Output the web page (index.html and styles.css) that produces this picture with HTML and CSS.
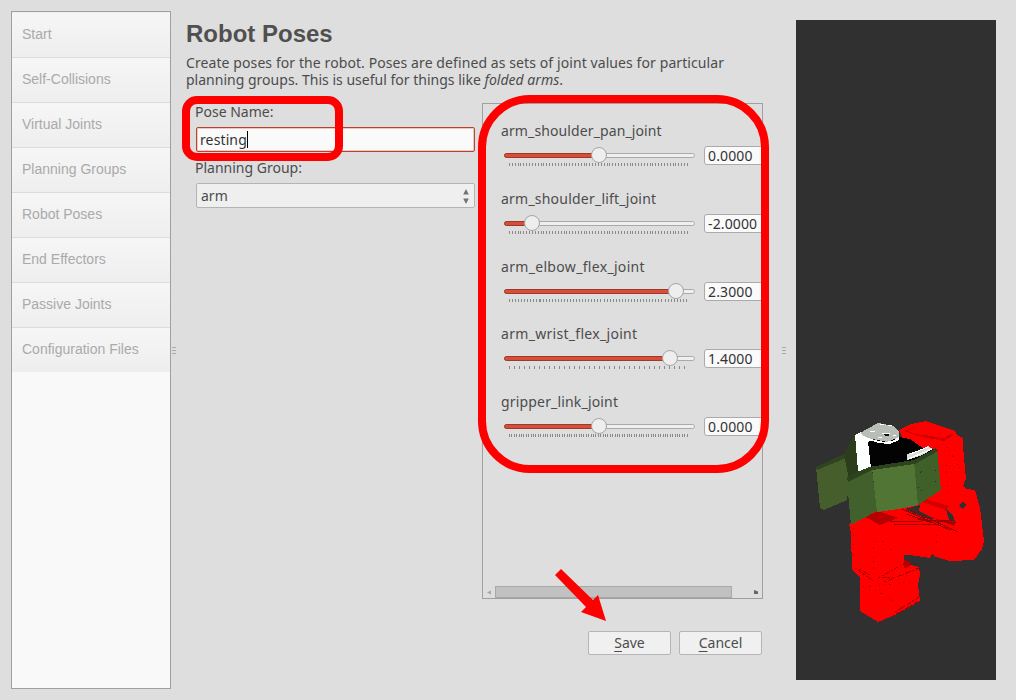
FILE: index.html
```html
<!DOCTYPE html>
<html lang="en">
<head>
<meta charset="utf-8">
<title>Robot Poses</title>
<link rel="stylesheet" href="styles.css">
</head>
<body>
<div class="app">
  <nav class="sidebar">
    <div class="nav-item">Start</div>
    <div class="nav-item">Self-Collisions</div>
    <div class="nav-item">Virtual Joints</div>
    <div class="nav-item">Planning Groups</div>
    <div class="nav-item">Robot Poses</div>
    <div class="nav-item">End Effectors</div>
    <div class="nav-item">Passive Joints</div>
    <div class="nav-item">Configuration Files</div>
  </nav>
  <div class="grip grip-left"><i></i><i></i><i></i></div>
  <main class="main">
    <h1 class="title">Robot Poses</h1>
    <p class="desc"><span class="line1">Create poses for the robot. Poses are defined as sets of joint values for particular</span><br><span class="line2">planning groups. This is useful for things like <em>folded arms</em>.</span></p>
    <div class="columns">
      <form class="form">
        <label class="label pose-label">Pose Name:</label>
        <div class="input"><span class="typed">resting</span><span class="caret"></span></div>
        <label class="label group-label">Planning Group:</label>
        <div class="select"><span>arm</span>
          <svg class="spin" width="8" height="18" viewBox="0 0 8 18"><path d="M4 2L6.8 7.5H1.2ZM4 17L6.8 11.5H1.2Z" fill="#737373"/></svg>
        </div>
      </form>
      <section class="joints">
        <div class="joint-list">
          <div class="joint"><div class="joint-name n1">arm_shoulder_pan_joint</div><div class="joint-row"><div class="slider"><div class="groove"><div class="fill" style="width:95px"></div></div><div class="knob" style="left:87px"></div><div class="ticks t1"></div></div><div class="value">0.0000</div></div></div>
          <div class="joint"><div class="joint-name n2">arm_shoulder_lift_joint</div><div class="joint-row"><div class="slider"><div class="groove"><div class="fill" style="width:28px"></div></div><div class="knob" style="left:20px"></div><div class="ticks t1"></div></div><div class="value">-2.0000</div></div></div>
          <div class="joint"><div class="joint-name n3">arm_elbow_flex_joint</div><div class="joint-row"><div class="slider"><div class="groove"><div class="fill" style="width:172px"></div></div><div class="knob" style="left:164px"></div><div class="ticks t3"></div></div><div class="value">2.3000</div></div></div>
          <div class="joint"><div class="joint-name n4">arm_wrist_flex_joint</div><div class="joint-row"><div class="slider"><div class="groove"><div class="fill" style="width:166px"></div></div><div class="knob" style="left:158px"></div><div class="ticks t4"></div></div><div class="value">1.4000</div></div></div>
          <div class="joint"><div class="joint-name n5">gripper_link_joint</div><div class="joint-row"><div class="slider"><div class="groove"><div class="fill" style="width:95px"></div></div><div class="knob" style="left:87px"></div><div class="ticks t5"></div></div><div class="value">0.0000</div></div></div>
        </div>
        <div class="scrollbar">
          <svg width="12" height="12" viewBox="0 0 12 12"><path d="M4 6.5L8 4.5V8.5Z" fill="#a5a5a5"/></svg>
          <div class="thumb"></div>
          <svg class="arrow-right" width="12" height="12" viewBox="0 0 12 12"><path d="M4 4L8 5.5V8H4Z" fill="#666"/></svg>
        </div>
      </section>
    </div>
    <div class="actions">
      <button class="btn"><span class="mn">S</span>ave</button>
      <button class="btn"><span class="mn">C</span>ancel</button>
    </div>
  </main>
  <div class="grip grip-right"><i></i><i></i><i></i></div>
  <aside class="preview">
    <svg class="robot" width="200" height="660" viewBox="796 20 200 660" shape-rendering="crispEdges">
      <path fill="#f00" d="M899 430L911 424L926 421L955 431L957 435L963 438L963 446L966 479L963 486L967 489L975 490L980 508L984 541L982 549L974 560L950 561L936 557L932 554L930 558L909 555L904 555L904 563L919 567L920 575L918 585L920 601L897 614L878 622L860 611L860 577L852 570L851 533L849 524L864 510L896 501L919 501L910 455Z"/>
      <path fill="#d40000" d="M903 431L926 424L954 435L944 441L922 437ZM917 496L949 506L945 510L920 501Z"/>
      <path fill="#f00" d="M907 431L926 423L953 433L944 438L916 434Z"/>
      <path fill="#b90000" d="M865 517L878 511L898 518L880 525ZM904 560L911 562L909 567L904 568ZM935 519L956 522L954 526Z"/>
      <path fill="#303030" d="M946 509L953 515L955 522L949 520ZM959 505L963 502L967 505L962 509ZM905 509L920 505L919 511L935 519L924 518Z"/>
      <path fill="none" stroke="#970000" stroke-width="1" d="M902 509L950 530M908 509L958 532M894 524H938M890 522L952 520M906 514L932 523M918 519L956 523"/>
      <path fill="none" stroke="#a40000" stroke-width="1" stroke-dasharray="2 2 5 1" d="M855 568L875 582M859 569L870 575M882 576L909 561M884 582L919 568M878 577H893M893 616L919 601M895 612L919 597"/>
      <path fill="none" stroke="#b40000" stroke-width="1" stroke-dasharray="1 5 2 8 1 3" d="M853 528V563M873 541V575M876 542L887 541M884 550L900 549M936 535V550M939 433L961 470M946 465L948 492M875 590L897 603M863 587L910 582"/>
      <path fill="#455e2b" d="M816 467L844 455L850 478L847 500L824 510L820 508Z"/>
      <path fill="#304420" d="M816 467L844 454L846 458L817 470Z"/>
      <path fill="#2b3d1b" d="M844 454L855 434L861 431L869 468L871 472L849 480Z"/>
      <path fill="#030303" d="M867 441L899 437L910 439L920 446L926 451L934 449L930 461L870 467Z"/>
      <path fill="#fcfffc" d="M855 435L866 430L875 438L868 442L871 468L861 472L858 471Z"/>
      <path fill="#b8bdb8" d="M860 433L878 423L893 426L899 431L899 437L888 442L867 438Z"/>
      <path fill="#fff" d="M866 437L874 440L884 442L892 441L899 437V440L890 444L878 443L866 439Z"/>
      <path fill="none" stroke="#fff" d="M880 424H884M888 425H892M878 437H882M893 435H896M870 431H875M882 433H890"/>
      <path fill="#111" d="M884 434H889V436H885Z"/>
      <path fill="#d9ded8" d="M907 454L923 449L928 446L933 449L922 455L907 460Z"/>
      <path fill="none" stroke="#fff" d="M908 459L932 449M910 454L928 447"/>
      <path fill="#41602b" d="M847 481L872 469L877 511L851 525Z"/>
      <path fill="#507535" d="M872 468L914 461L919 505L898 509L877 512Z"/>
      <path fill="#40602a" d="M914 461L937 449L941 490L918 505Z"/>
      <path fill="#2d431e" d="M847 477L869 467L914 460L936 448L938 451L915 464L872 470L848 482Z"/>
      <path fill="#23331a" d="M921 471h1v1h-1ZM920 472h1v1h-1ZM935 470h1v1h-1ZM935 481h1v1h-1ZM921 490h1v1h-1ZM918 487h1v1h-1Z"/>
    </svg>
  </aside>
</div>
<svg class="annotations" width="1016" height="700" viewBox="0 0 1016 700">
  <rect x="186" y="100" width="153" height="57" rx="11" fill="none" stroke="#f00" stroke-width="8"/>
  <rect x="482" y="99" width="283" height="370" rx="48" fill="none" stroke="#f00" stroke-width="8"/>
  <path fill="#f00" d="M561 569L593 600L598 595L606 621L581 612L586 607L555 575Z"/>
</svg>
</body>
</html>
```

FILE: styles.css
```css
* { box-sizing: border-box; }
body { margin: 0; background: #dedede; color: #4c4c4c; font-family: "Noto Sans", sans-serif; font-size: 14px; overflow: hidden; }
.app { display: flex; width: 1016px; height: 700px; padding: 11px 20px 11px 11px; }
.sidebar { width: 160px; height: 678px; border: 1px solid #a0a0a0; background: #f9f9f9; }
.nav-item { height: 45px; padding: 0 10px; line-height: 43px; font-family: "Liberation Sans", sans-serif; font-size: 14px; color: #aaa; background: linear-gradient(#f6f6f6, #eee); border-top: 1px solid #dcdcdc; }
.nav-item:first-child { border-top-color: #eee; }
.grip { display: flex; flex-direction: column; gap: 2px; padding-top: 336px; }
.grip i { width: 4px; height: 1px; background: #aaa; }
.grip-left { width: 15px; padding-left: 1px; }
.grip-right { width: 33px; padding-left: 19px; }
.main { width: 577px; }
.title { margin: 7px 0 0; font: bold 24px/32px "Liberation Sans", sans-serif; color: #505050; }
.desc { margin: 4px 0 0; line-height: 17px; white-space: nowrap; height: 38px; }
.line1 { letter-spacing: 0.09px; }
.line2 { letter-spacing: 0.01px; }
.columns { display: flex; height: 496px; margin-top: 11px; }
.form { width: 296px; padding-left: 9px; }
.label { display: block; height: 17px; line-height: 17px; }
.input, .select { width: 279px; height: 25px; border: 1px solid #b8432f; border-radius: 2px; display: flex; align-items: center; margin: 7px 0 0 1px; padding-left: 3px; background: #fafafa; }
.input { box-shadow: inset 0 0 0 1px #efc7c1; color: #333; }
.typed { letter-spacing: 0.12px; }
.caret { width: 1px; height: 17px; background: #000; }
.group-label { margin-top: 7px; }
.select { border-color: #b4b4b4; background: #efefef; justify-content: space-between; padding: 0 4px; }
.joints { width: 281px; height: 496px; border: 1px solid #a0a0a0; display: flex; flex-direction: column; overflow: hidden; }
.joint-list { height: 482px; padding: 17px 0 0 18px; }
.joint { height: 67.75px; }
.joint-name { height: 20px; line-height: 20px; }
.n1 { letter-spacing: 0.11px; }
.n2 { letter-spacing: 0.22px; }
.n3 { letter-spacing: 0.32px; }
.n4 { letter-spacing: 0.3px; }
.n5 { letter-spacing: 0.17px; }
.joint-row { display: flex; padding-top: 5px; gap: 9px; }
.slider { position: relative; flex: none; width: 191px; height: 24px; margin-left: 3px; padding-top: 7px; }
.groove { height: 5px; border: 1px solid #aaa; border-radius: 3px; background: #efefef; }
.fill { height: 5px; margin: -1px; border: 1px solid #983a2c; border-radius: 3px; background: #da4e39; }
.knob { position: absolute; top: 1px; width: 16px; height: 16px; border: 1px solid #a5a5a5; border-radius: 50%; background: #eee; }
.ticks { height: 3px; margin: 5px 6px 0 5px; }
.t1 { background: repeating-linear-gradient(90deg, #8a8a8a 0 1px, transparent 1px 2.87px); }
.t3 { background: repeating-linear-gradient(90deg, #8a8a8a 0 1px, transparent 1px 3.05px); }
.t4 { background: repeating-linear-gradient(90deg, #8a8a8a 0 1px, transparent 1px 5px); }
.t5 { background: repeating-linear-gradient(90deg, #8a8a8a 0 1px, transparent 1px 2.4px); }
.value { width: 80px; height: 19px; flex: none; border: 1px solid #aaa; border-radius: 3px; background: #fafafa; color: #333; padding-left: 3px; line-height: 17px; letter-spacing: 0.12px; }
.scrollbar { display: flex; height: 12px; align-items: center; }
.thumb { width: 237px; height: 12px; border: 1px solid #a8a8a8; background: #c1c1c1; }
.arrow-right { margin-left: auto; }
.actions { display: flex; justify-content: flex-end; gap: 8px; padding: 32px 1px 0 0; }
.btn { width: 83px; height: 24px; padding: 0 0 2px; border: 1px solid #b5b5b5; border-radius: 2px; background: #f0f0f0; color: #4c4c4c; font: 14px "Noto Sans", sans-serif; }
.mn { text-decoration: underline; text-underline-offset: 3px; text-decoration-thickness: 1px; }
.preview { width: 200px; height: 660px; margin-top: 9px; background: #303030; }
.robot { display: block; }
.annotations { position: absolute; left: 0; top: 0; pointer-events: none; }
```
